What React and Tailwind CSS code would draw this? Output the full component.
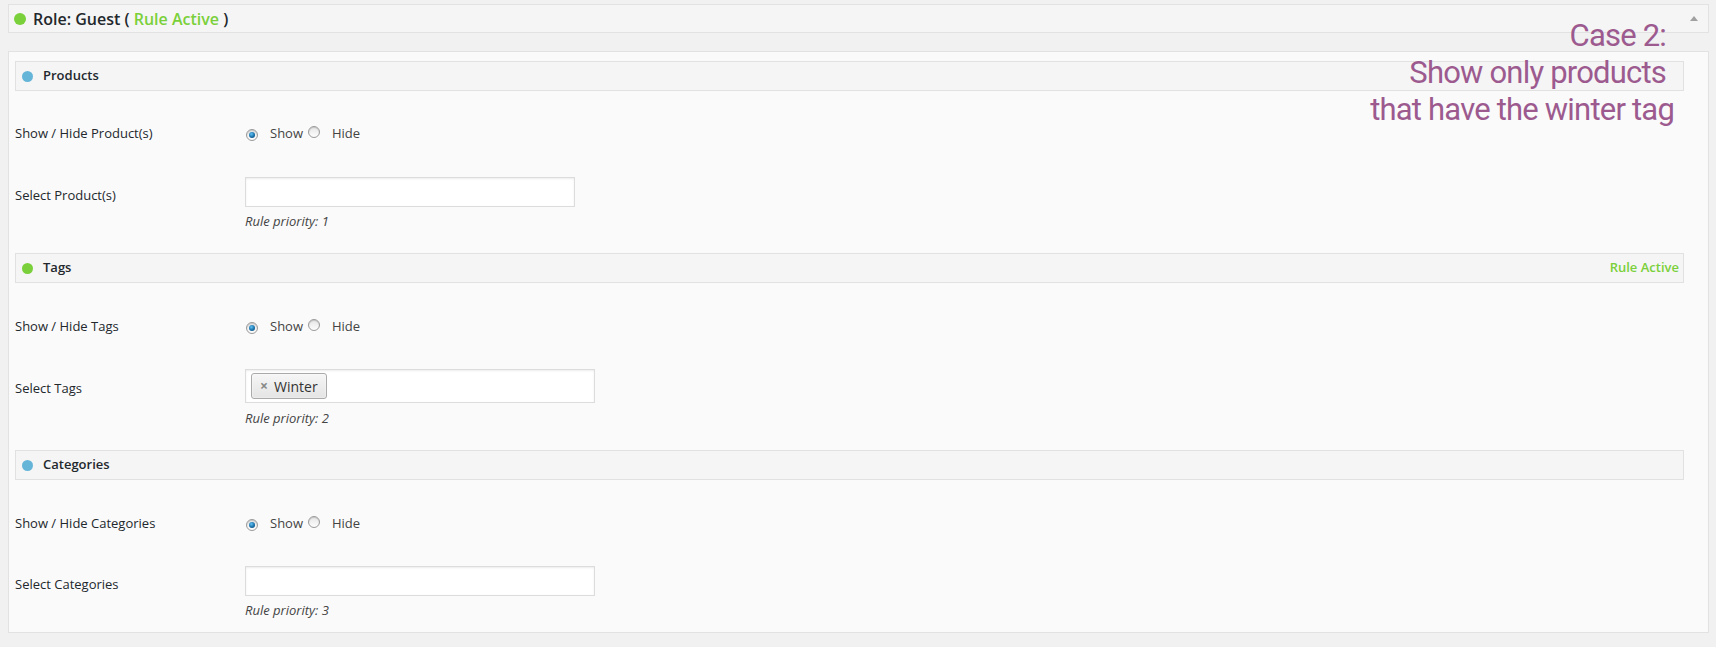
import React from "react";

const FONT = { fontFamily: '"Open Sans", "Liberation Sans", sans-serif' };

function Radio({ checked }) {
  return (
    <span className="inline-flex h-[12px] w-[12px] items-center justify-center rounded-full border border-[#9a9a9a] bg-gradient-to-b from-[#e6e6e6] to-[#fdfdfd] shadow-[inset_0_1px_1px_rgba(0,0,0,0.15)]">
      {checked && (
        <span className="block h-[6px] w-[6px] rounded-full bg-[radial-gradient(circle_at_40%_35%,#5fc3f5_0%,#1a6fa8_55%,#0b3f66_100%)]" />
      )}
    </span>
  );
}

function SectionHeader({ title, color, active }) {
  return (
    <div className="flex h-[30px] items-center border border-[#e1e1e1] bg-[#f5f5f5] pl-[6px] pr-[4px]">
      <span className="h-[11px] w-[11px] rounded-full" style={{ background: color }} />
      <span className="ml-[10px] text-[13px] font-semibold text-[#23282d]">{title}</span>
      {active && (
        <span className="ml-auto text-[13px] font-semibold text-[#7ad03a]">Rule Active</span>
      )}
    </div>
  );
}

function ShowHideRow({ label, mt }) {
  return (
    <div className={`flex h-[20px] items-center ${mt}`}>
      <div className="w-[230px] text-[13px] text-[#23282d]">{label}</div>
      <div className="flex items-center text-[13px] text-[#444]">
        <span className="ml-[1px]"><Radio checked /></span>
        <span className="ml-[12px]">Show</span>
        <span className="ml-[5px]"><Radio /></span>
        <span className="ml-[12px]">Hide</span>
      </div>
    </div>
  );
}

function SelectRow({ label, mt, labelPt, inputW, inputH, children }) {
  return (
    <div className={`flex items-start ${mt}`}>
      <div className={`w-[230px] text-[13px] leading-[20px] text-[#23282d] ${labelPt}`}>{label}</div>
      <div
        className={`flex items-center border border-[#dcdcdc] bg-white pl-[5px] shadow-[inset_0_1px_2px_rgba(0,0,0,0.08)] ${inputW} ${inputH}`}
      >
        {children}
      </div>
    </div>
  );
}

function Priority({ n, mt }) {
  return (
    <div className={`pl-[230px] text-[13px] italic leading-[16px] text-[#444] ${mt}`}>
      Rule priority: {n}
    </div>
  );
}

export default function App() {
  return (
    <div className="relative h-[647px] w-[1716px] overflow-hidden bg-[#f1f1f1]" style={FONT}>
      <div className="pl-[8px] pr-[7px] pt-[4px]">
        <div className="flex h-[29px] items-center border border-[#e2e2e2] bg-[#f5f5f5] pl-[5px] pr-[10px]">
          <span className="h-[12px] w-[12px] rounded-full bg-[#7ad03a]" />
          <span className="ml-[7px] text-[16px] font-semibold text-[#23282d]">
            Role: Guest ( <span className="text-[#7ad03a]">Rule Active</span> )
          </span>
          <span className="ml-auto h-0 w-0 border-x-[4px] border-b-[5px] border-x-transparent border-b-[#a0a0a0]" />
        </div>

        <div className="mt-[18px] h-[582px] border border-[#e2e2e2] bg-[#fafafa] pl-[6px] pr-[24px] pt-[9px]">
          <SectionHeader title="Products" color="#65b5d9" />
          <ShowHideRow label="Show / Hide Product(s)" mt="mt-[33px]" />
          <SelectRow label="Select Product(s)" mt="mt-[33px]" labelPt="pt-[8px]" inputW="w-[330px]" inputH="h-[30px]" />
          <Priority n={1} mt="mt-[6px]" />

          <div className="mt-[24px]">
            <SectionHeader title="Tags" color="#7ad03a" active />
          </div>
          <ShowHideRow label="Show / Hide Tags" mt="mt-[34px]" />
          <SelectRow label="Select Tags" mt="mt-[32px]" labelPt="pt-[9px]" inputW="w-[350px]" inputH="h-[34px]">
            <span className="flex h-[26px] items-center rounded-[3px] border border-[#aaaaaa] bg-gradient-to-b from-[#f6f6f6] to-[#e4e4e4] pl-[8px] pr-[8px] shadow-[inset_0_0_2px_white]">
              <span className="text-[14px] font-bold leading-none text-[#888]">×</span>
              <span className="ml-[6px] text-[14px] text-[#333]">Winter</span>
            </span>
          </SelectRow>
          <Priority n={2} mt="mt-[7px]" />

          <div className="mt-[24px]">
            <SectionHeader title="Categories" color="#65b5d9" />
          </div>
          <ShowHideRow label="Show / Hide Categories" mt="mt-[34px]" />
          <SelectRow label="Select Categories" mt="mt-[32px]" labelPt="pt-[8px]" inputW="w-[350px]" inputH="h-[30px]" />
          <Priority n={3} mt="mt-[6px]" />
        </div>
      </div>

      <div
        className="absolute right-[50px] top-[17px] text-right text-[31px] leading-[37px] tracking-[-0.8px] text-[#9c5a8f]"
        style={{ fontFamily: 'Roboto, "Liberation Sans", sans-serif', fontWeight: 400 }}
      >
        <div>Case 2:</div>
        <div>Show only products</div>
        <div className="mr-[-8px]">that have the winter tag</div>
      </div>
    </div>
  );
}
